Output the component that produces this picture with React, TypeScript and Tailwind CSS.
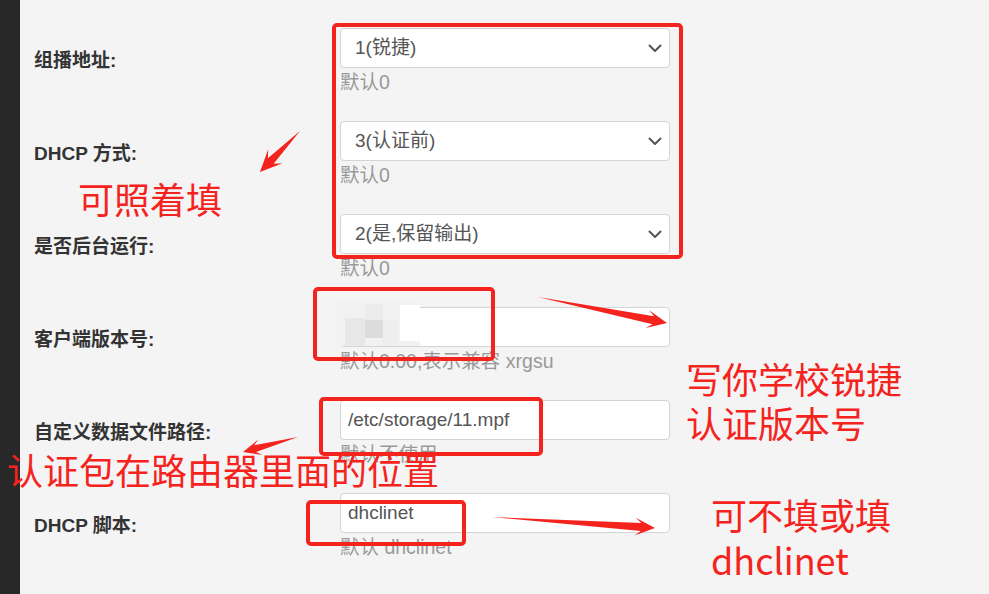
import React from "react";

const FONT = '"Liberation Sans", Arial, "Noto Sans CJK SC", sans-serif';
const CJK = '"Noto Sans CJK SC", "Liberation Sans", sans-serif';

function Chevron() {
  return (
    <svg width="14" height="9" viewBox="0 0 14 9" className="shrink-0">
      <path d="M1.5 1.5 L7 7 L12.5 1.5" fill="none" stroke="#555" strokeWidth="2" strokeLinecap="round" strokeLinejoin="round" />
    </svg>
  );
}

type Row = { label: string; kind: "select" | "input"; value: string; help: string };

const rows: Row[] = [
  { label: "组播地址:", kind: "select", value: "1(锐捷)", help: "默认0" },
  { label: "DHCP 方式:", kind: "select", value: "3(认证前)", help: "默认0" },
  { label: "是否后台运行:", kind: "select", value: "2(是,保留输出)", help: "默认0" },
  { label: "客户端版本号:", kind: "input", value: "", help: "默认0.00,表示兼容 xrgsu" },
  { label: "自定义数据文件路径:", kind: "input", value: "/etc/storage/11.mpf", help: "默认不使用" },
  { label: "DHCP 脚本:", kind: "input", value: "dhclinet", help: "默认 dhclinet" },
];

function arrowPoints(sx: number, sy: number, ex: number, ey: number, head: number, hw: number, nw: number) {
  const dx = ex - sx;
  const dy = ey - sy;
  const len = Math.hypot(dx, dy);
  const ux = dx / len;
  const uy = dy / len;
  const nx = -uy;
  const ny = ux;
  const neckX = ex - ux * head * 0.7;
  const neckY = ey - uy * head * 0.7;
  const wingX = ex - ux * head;
  const wingY = ey - uy * head;
  const pts = [
    [sx, sy],
    [neckX + nx * nw, neckY + ny * nw],
    [wingX + nx * hw, wingY + ny * hw],
    [ex, ey],
    [wingX - nx * hw, wingY - ny * hw],
    [neckX - nx * nw, neckY - ny * nw],
  ];
  return pts.map((p) => `${p[0].toFixed(1)},${p[1].toFixed(1)}`).join(" ");
}

export default function App() {
  return (
    <div className="relative flex h-[594px] w-full overflow-hidden bg-[#f4f4f4]" style={{ fontFamily: FONT }}>
      <div className="w-[20px] shrink-0 bg-[#282828]" />
      <div className="flex flex-col gap-[29px] pl-[14px] pt-[28px]">
        {rows.map((r) => (
          <div key={r.label} className="flex h-[64px] items-center">
            <div className="w-[306px] pt-[2px] text-[19px] font-bold text-[#333]">{r.label}</div>
            <div className="flex w-[330px] flex-col">
              <div className="flex h-[40px] items-center justify-between rounded-[4px] border border-[#d4d4d4] bg-white text-[19px] text-[#555]">
                {r.kind === "select" ? (
                  <>
                    <span className="pl-[14px]">{r.value}</span>
                    <span className="pr-[7px]">
                      <Chevron />
                    </span>
                  </>
                ) : (
                  <span className="pl-[7px]">{r.value}</span>
                )}
              </div>
              <div className="mt-[2px] h-[22px] whitespace-nowrap text-[19.5px] leading-[24px] text-[#999]">{r.help}</div>
            </div>
          </div>
        ))}
      </div>

      {/* annotation overlay */}
      <div className="pointer-events-none absolute inset-0">
        {/* mosaic */}
        <div className="absolute left-[336px] top-[300px] h-[46px] w-[84px] bg-[#f2f2f2]" />
        <div className="absolute left-[345px] top-[318px] h-[28px] w-[20px] bg-[#e8e8e8]" />
        <div className="absolute left-[365px] top-[320px] h-[18px] w-[18px] bg-[#dcdcdc]" />
        <div className="absolute left-[365px] top-[304px] h-[16px] w-[18px] bg-[#ececec]" />
        <div className="absolute left-[383px] top-[320px] h-[26px] w-[16px] bg-[#eeeeee]" />
        <div className="absolute left-[400px] top-[305px] h-[36px] w-[20px] bg-white" />

        {/* red boxes */}
        <div className="absolute left-[332px] top-[23px] h-[236px] w-[351px] rounded-[5px] border-[4px] border-[#f5231e]" />
        <div className="absolute left-[313px] top-[287px] h-[74px] w-[182px] rounded-[5px] border-[4px] border-[#f5231e]" />
        <div className="absolute left-[319px] top-[397px] h-[59px] w-[224px] rounded-[5px] border-[4px] border-[#f5231e]" />
        <div className="absolute left-[306px] top-[500px] h-[46px] w-[160px] rounded-[5px] border-[4px] border-[#f5231e]" />

        {/* arrows */}
        <svg className="absolute inset-0" width="989" height="594">
          <polygon points={arrowPoints(300, 131, 260, 172, 22, 10, 4)} fill="#f5231e" />
          <polygon points={arrowPoints(538, 297, 667, 323, 20, 9, 4)} fill="#f5231e" />
          <polygon points={arrowPoints(298, 437, 243, 452, 18, 8, 3.5)} fill="#f5231e" />
          <polygon points={arrowPoints(492, 517, 655, 528, 20, 9, 4)} fill="#f5231e" />
        </svg>

        {/* red texts */}
        <div className="absolute left-[78px] top-[176px] whitespace-nowrap text-[36px] leading-[44px] text-[#f5231e]" style={{ fontFamily: CJK }}>
          可照着填
        </div>
        <div className="absolute left-[686px] top-[356px] whitespace-nowrap text-[36px] leading-[44px] text-[#f5231e]" style={{ fontFamily: CJK }}>
          写你学校锐捷
          <br />
          认证版本号
        </div>
        <div className="absolute left-[7px] top-[447px] whitespace-nowrap text-[36px] leading-[44px] text-[#f5231e]" style={{ fontFamily: CJK }}>
          认证包在路由器里面的位置
        </div>
        <div className="absolute left-[711px] top-[492px] whitespace-nowrap text-[36px] leading-[45px] text-[#f5231e]" style={{ fontFamily: CJK }}>
          可不填或填
          <br />
          dhclinet
        </div>
      </div>
    </div>
  );
}
